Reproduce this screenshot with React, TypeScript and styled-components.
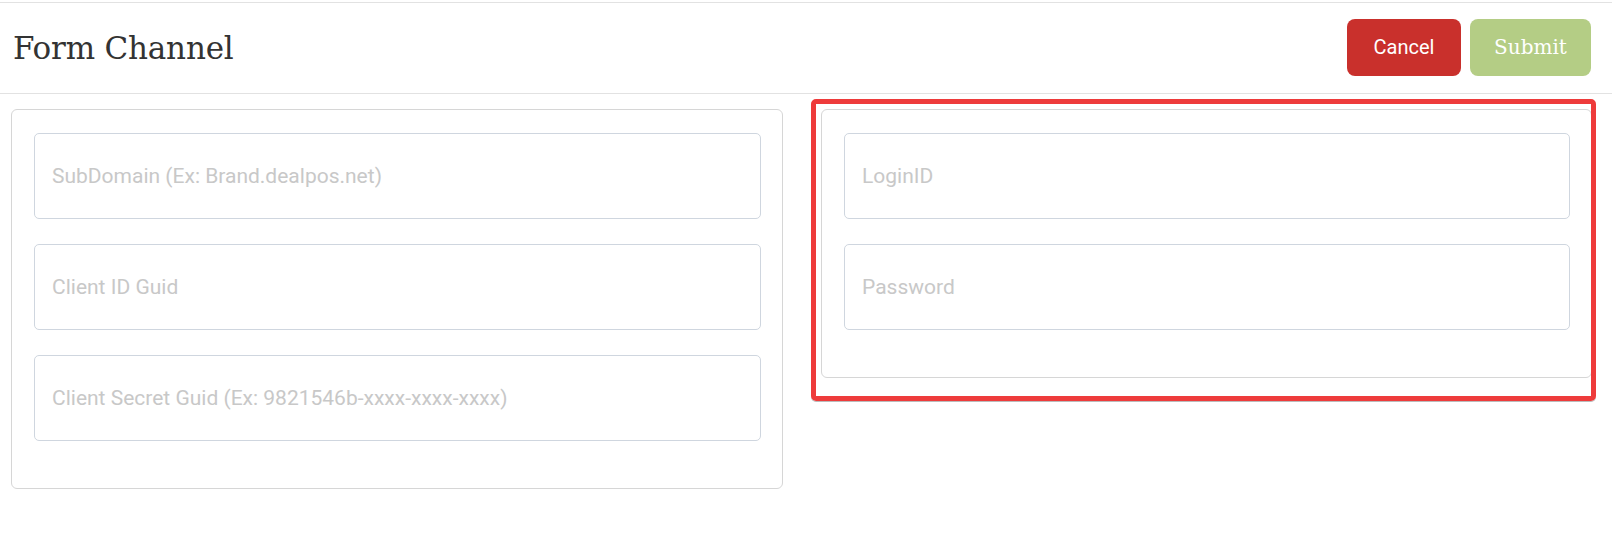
import React from "react";
import styled, { createGlobalStyle, css } from "styled-components";

const GlobalStyle = createGlobalStyle`
  html, body {
    margin: 0;
    padding: 0;
    background: #ffffff;
    font-family: Roboto, "Liberation Sans", Arial, sans-serif;
  }
  * { box-sizing: border-box; }
`;

const Page = styled.div`
  width: 1612px;
  padding-top: 2px;
`;

const Header = styled.header`
  display: flex;
  align-items: center;
  justify-content: space-between;
  height: 92px;
  padding: 0 21px 2px 13px;
  border-top: 1px solid #e2e2e2;
  border-bottom: 1px solid #e2e2e2;
`;

const Title = styled.h1`
  margin: 0;
  padding-top: 2px;
  font-family: "DejaVu Serif", "Liberation Serif", serif;
  font-weight: 400;
  font-size: 31px;
  color: #333333;
  letter-spacing: -0.2px;
`;

const Actions = styled.div`
  display: flex;
  gap: 9px;
`;

const Button = styled.button<{ $variant: "cancel" | "submit" }>`
  height: 57px;
  border: none;
  border-radius: 8px;
  color: #ffffff;
  font-size: 20px;
  cursor: pointer;
  ${(p) =>
    p.$variant === "cancel"
      ? css`
          width: 114px;
          background: #c9302c;
          font-family: Roboto, "Liberation Sans", sans-serif;
        `
      : css`
          width: 121px;
          background: #b4cd85;
          font-family: "DejaVu Serif", "Liberation Serif", serif;
          font-size: 20px;
        `}
`;

const Columns = styled.div`
  display: grid;
  grid-template-columns: 772px 771px;
  column-gap: 38px;
  align-items: start;
  padding: 15px 0 0 11px;
`;

const Card = styled.div`
  display: flex;
  flex-direction: column;
  gap: 25px;
  padding: 23px 21px 47px 22px;
  border: 1px solid #d6d6d6;
  border-radius: 6px;
  background: #ffffff;
`;

const Field = styled.input`
  width: 100%;
  height: 86px;
  padding: 0 17px;
  border: 1px solid #cfd6df;
  border-radius: 5px;
  font-family: Roboto, "Liberation Sans", sans-serif;
  font-size: 21px;
  color: #333333;
  outline: none;
  background: #ffffff;
  &::placeholder {
    color: #c8c8c8;
  }
`;

const Highlighted = styled.div`
  position: relative;
`;

const Annotation = styled.div`
  position: absolute;
  top: -10px;
  left: -10px;
  right: -4px;
  bottom: -23px;
  border: 5px solid #ee3b3b;
  border-radius: 5px;
  box-shadow: 0 1px 0 rgba(60, 60, 60, 0.35);
  pointer-events: none;
`;

export default function App() {
  return (
    <>
      <GlobalStyle />
      <Page>
        <Header>
          <Title>Form Channel</Title>
          <Actions>
            <Button $variant="cancel">Cancel</Button>
            <Button $variant="submit">Submit</Button>
          </Actions>
        </Header>
        <Columns>
          <Card>
            <Field placeholder="SubDomain (Ex: Brand.dealpos.net)" />
            <Field placeholder="Client ID Guid" />
            <Field placeholder="Client Secret Guid (Ex: 9821546b-xxxx-xxxx-xxxx)" />
          </Card>
          <Highlighted>
            <Card>
              <Field placeholder="LoginID" />
              <Field placeholder="Password" type="password" />
            </Card>
            <Annotation />
          </Highlighted>
        </Columns>
      </Page>
    </>
  );
}
